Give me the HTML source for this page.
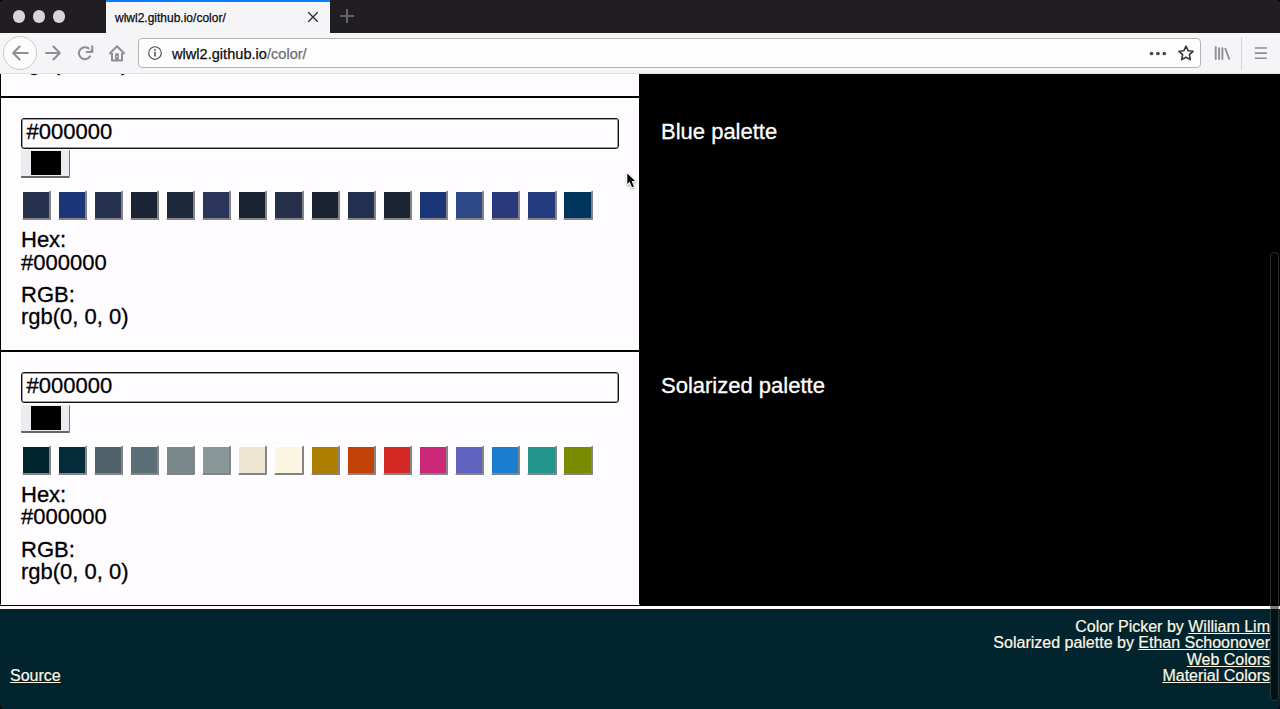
<!DOCTYPE html>
<html lang="en">
<head>
<meta charset="utf-8">
<title>wlwl2.github.io/color/</title>
<style>
*{box-sizing:border-box}
html,body{margin:0;padding:0}
body{width:1280px;height:709px;overflow:hidden;position:relative;background:#000;font-family:"Liberation Sans",Arial,Helvetica,sans-serif;color:#000}
svg{position:absolute;display:block;overflow:visible}
/* ---------- browser chrome ---------- */
#tabbar{position:absolute;left:0;top:0;width:1280px;height:33px;background:#201e21;border-radius:4px 4px 0 0}
.light{position:absolute;top:10.2px;width:12.6px;height:12.6px;border-radius:50%;background:#d6d4d7}
#tab{position:absolute;left:106px;top:0;width:224px;height:33px;background:#f5f4f7;border-top:2px solid #0a7cff}
#tabtitle{position:absolute;left:9px;top:7.5px;font-size:12px;line-height:16px;color:#0c0c0d;white-space:nowrap;-webkit-text-stroke:0.25px currentColor}
#navbar{position:absolute;left:0;top:33px;width:1280px;height:41px;background:#f5f4f7;border-bottom:1px solid #e0dfe3}
#backc{position:absolute;left:3px;top:3px;width:34px;height:34px;border-radius:50%;border:1px solid #c9c9cc;background:#fcfcfd}
#urlbar{position:absolute;left:138px;top:5px;width:1063px;height:30px;background:#fefdfe;border:1px solid #b4b4b7;border-radius:4px}
#urltext{position:absolute;left:33px;top:5.5px;font-size:14.6px;line-height:18px;color:#0c0c0d;white-space:nowrap;-webkit-text-stroke:0.25px currentColor}
#urltext span{color:#6e6e72}
#sep{position:absolute;left:1241px;top:4px;width:1px;height:33px;background:#d4d4d7}
/* ---------- page ---------- */
#page{position:absolute;left:0;top:74px;width:1280px;height:635px;overflow:hidden;background:#000}
.sec{position:absolute;left:0;width:640px;height:254px;border:1px solid #000;background:#fefcff;font-size:22px;line-height:22.5px;-webkit-text-stroke:0.3px #000}
.hexin{position:absolute;left:20px;top:19.5px;width:598px;height:31px;border:1px solid #111;box-shadow:inset 0 0 0 1px rgba(0,0,0,.38);border-radius:3px;background:#fefcff;font-size:22px;line-height:25px;padding:0 0 0 4.5px;white-space:nowrap}
.cin{position:absolute;left:20px;top:52px;width:49px;height:28px;background:#ececee;border-right:1.5px solid #777;border-bottom:2px solid #666;border-radius:1px}
.cin i{position:absolute;left:10px;top:1px;width:30px;height:24px;background:#000;display:block}
.sw{position:absolute;top:92.4px;width:29.2px;height:29.6px;border-style:solid;border-width:2px 2px 2px 1.5px;border-color:#fff #848486 #848486 #fff;border-radius:1.5px}
.t{position:absolute;left:20px;white-space:nowrap}
.rt{position:absolute;left:661px;font-size:22px;line-height:26px;color:#fff;white-space:nowrap;-webkit-text-stroke:0.3px #fff}
#whiteline{position:absolute;left:0;top:532px;width:1280px;height:3px;background:#fefcff}
#footer{position:absolute;left:0;top:535px;width:1280px;height:100px;border-radius:0 0 4px 4px;background:#02242f;color:#fdf6e3;font-size:16px;line-height:16.4px;-webkit-text-stroke:0.2px #fdf6e3}
#footer a{color:#fdf6e3;text-decoration:underline}
#fr{position:absolute;right:10px;top:9.7px;text-align:right;white-space:nowrap}
#fl{position:absolute;left:10px;top:58.9px}
#thumb{position:absolute;left:1270px;top:252px;width:9px;height:449px;border-radius:4.5px;background:rgba(0,0,0,.5);border:1px solid rgba(255,255,255,.16)}
.corner{position:absolute;width:5px;height:5px;background:#000}
</style>
</head>
<body>
<div id="tabbar">
  <div class="light" style="left:12.7px"></div><div class="light" style="left:32.7px"></div><div class="light" style="left:52.7px"></div>
  <div id="tab"><div id="tabtitle">wlwl2.github.io/color/</div>
    <svg style="left:202px;top:10px" width="10" height="10" viewBox="0 0 10 10"><path d="M0.3 0.3L9.7 9.7M9.7 0.3L0.3 9.7" stroke="#2a2a2e" stroke-width="1.3" fill="none"/></svg>
  </div>
  <svg style="left:340px;top:9px" width="14" height="14" viewBox="0 0 14 14"><path d="M7 0V14M0 7H14" stroke="#646367" stroke-width="2" fill="none"/></svg>
</div>
<div id="navbar">
  <div id="backc"></div>
  <!-- back -->
  <svg style="left:12px;top:13px" width="16" height="14" viewBox="0 0 16 14"><path d="M15.8 7H1.2M7.6 0.5L1.2 7L7.6 13.5" stroke="#8f8f92" stroke-width="2.1" fill="none" stroke-linecap="round" stroke-linejoin="round"/></svg>
  <!-- forward -->
  <svg style="left:45px;top:13px" width="16" height="14" viewBox="0 0 16 14"><path d="M1.1 7H14.8M8.4 0.5L14.8 7L8.4 13.5" stroke="#8f8f92" stroke-width="2.1" fill="none" stroke-linecap="round" stroke-linejoin="round"/></svg>
  <!-- reload -->
  <svg style="left:77px;top:12px" width="17" height="16" viewBox="0 0 17 16"><path d="M11.6 3.4A6 6 0 1 0 13 11.4" stroke="#8f8f92" stroke-width="2" fill="none" stroke-linecap="round"/><path d="M15.3 1.3V6.9H9.6" fill="none" stroke="#8f8f92" stroke-width="2" stroke-linejoin="round" stroke-linecap="round"/><path d="M15.3 6.9V3.6L12 6.9Z" fill="#8f8f92"/></svg>
  <!-- home -->
  <svg style="left:109px;top:12px" width="16" height="16" viewBox="0 0 16 16"><path d="M1 8.2L8 1.2L15 8.2" stroke="#8f8f92" stroke-width="2" fill="none" stroke-linecap="round" stroke-linejoin="round"/><path d="M3 8V15.6H13V8" stroke="#8f8f92" stroke-width="2" fill="none" stroke-linejoin="round"/><path d="M6.1 8.3H9.9V15H6.1Z" fill="#8f8f92"/><circle cx="8" cy="11.6" r="0.7" fill="#f1f0f3"/></svg>
  <div id="urlbar">
    <svg style="left:9px;top:7px" width="14" height="14" viewBox="0 0 14 14"><circle cx="7" cy="7" r="6.3" stroke="#4c4c50" stroke-width="1.15" fill="none"/><circle cx="7" cy="3.9" r="0.95" fill="#4c4c50"/><path d="M7 5.9V10.4" stroke="#4c4c50" stroke-width="1.6" fill="none"/></svg>
    <div id="urltext">wlwl2.github.io<span>/color/</span></div>
    <svg style="left:1010.2px;top:11.6px" width="18" height="5" viewBox="0 0 18 5"><circle cx="2.5" cy="2.5" r="1.85" fill="#4a4a4f"/><circle cx="8.9" cy="2.5" r="1.85" fill="#4a4a4f"/><circle cx="15.3" cy="2.5" r="1.85" fill="#4a4a4f"/></svg>
    <svg style="left:1039px;top:5.7px" width="16" height="16" viewBox="0 0 16 16"><path d="M8 1.2L10.1 5.7L15 6.3L11.4 9.7L12.3 14.6L8 12.2L3.7 14.6L4.6 9.7L1 6.3L5.9 5.7Z" stroke="#3a3a3e" stroke-width="1.65" fill="none" stroke-linejoin="round"/></svg>
  </div>
  <!-- library -->
  <svg style="left:1214px;top:12px" width="17" height="15" viewBox="0 0 17 15"><path d="M1.7 1.3V14.7M5.1 2.6V14.7M8.4 2.6V14.7M11.1 3L15.4 14.5" stroke="#8f8f92" stroke-width="1.9" fill="none" stroke-linecap="butt"/></svg>
  <div id="sep"></div>
  <!-- menu -->
  <svg style="left:1254px;top:13px" width="13" height="13" viewBox="0 0 13 13"><path d="M0.8 2H12.9M0.8 7.1H12.9M0.8 12.3H12.9" stroke="#8f8f92" stroke-width="1.6" fill="none"/></svg>
</div>
<div id="page">
  <div class="sec" style="top:-231px"><div class="t" style="top:208px">rgb(0, 0, 0)</div></div>
  <div class="sec" style="top:23px">
    <div class="hexin">#000000</div><div class="cin"><i></i></div>
    <div class="sw" style="left:20.50px;background:#27324e"></div><div class="sw" style="left:56.63px;background:#1b3677"></div><div class="sw" style="left:92.76px;background:#26324f"></div><div class="sw" style="left:128.89px;background:#1b2434"></div><div class="sw" style="left:165.02px;background:#1e283c"></div><div class="sw" style="left:201.15px;background:#2b345a"></div><div class="sw" style="left:237.28px;background:#1a2232"></div><div class="sw" style="left:273.41px;background:#27304b"></div><div class="sw" style="left:309.54px;background:#1b2333"></div><div class="sw" style="left:345.67px;background:#232f4f"></div><div class="sw" style="left:381.80px;background:#1c2433"></div><div class="sw" style="left:417.93px;background:#1b3678"></div><div class="sw" style="left:454.06px;background:#2f4888"></div><div class="sw" style="left:490.19px;background:#2a387c"></div><div class="sw" style="left:526.32px;background:#243a7e"></div><div class="sw" style="left:562.45px;background:#00355e"></div>
    <div class="t" style="top:131px">Hex:</div><div class="t" style="top:153.5px">#000000</div>
    <div class="t" style="top:186.4px">RGB:</div><div class="t" style="top:208.4px">rgb(0, 0, 0)</div>
  </div>
  <div class="sec" style="top:277px;border-bottom-color:#fefcff">
    <div class="hexin">#000000</div><div class="cin" style="top:52.5px"><i></i></div>
    <div class="sw" style="top:93px;left:20.50px;background:#00252f"></div><div class="sw" style="top:93px;left:56.63px;background:#062c3b"></div><div class="sw" style="top:93px;left:92.76px;background:#4f626a"></div><div class="sw" style="top:93px;left:128.89px;background:#5c6f78"></div><div class="sw" style="top:93px;left:165.02px;background:#7a888c"></div><div class="sw" style="top:93px;left:201.15px;background:#8a9799"></div><div class="sw" style="top:93px;left:237.28px;background:#ece5d2"></div><div class="sw" style="top:93px;left:273.41px;background:#fcf5e1"></div><div class="sw" style="top:93px;left:309.54px;background:#ac7f00"></div><div class="sw" style="top:93px;left:345.67px;background:#c44108"></div><div class="sw" style="top:93px;left:381.80px;background:#d52a24"></div><div class="sw" style="top:93px;left:417.93px;background:#cc2878"></div><div class="sw" style="top:93px;left:454.06px;background:#5f63bd"></div><div class="sw" style="top:93px;left:490.19px;background:#1b7dcf"></div><div class="sw" style="top:93px;left:526.32px;background:#22958c"></div><div class="sw" style="top:93px;left:562.45px;background:#788b00"></div>
    <div class="t" style="top:131.6px">Hex:</div><div class="t" style="top:154.1px">#000000</div>
    <div class="t" style="top:187px">RGB:</div><div class="t" style="top:209px">rgb(0, 0, 0)</div>
  </div>
  <div class="rt" style="top:45.3px">Blue palette</div>
  <div class="rt" style="top:299.3px">Solarized palette</div>
  <div id="whiteline"></div>
  <div id="footer">
    <div id="fr">Color Picker by <a>William Lim</a><br>Solarized palette by <a>Ethan Schoonover</a><br><a>Web Colors</a><br><a>Material Colors</a></div>
    <div id="fl"><a>Source</a></div>
  </div>
</div>
<!-- mouse cursor -->
<svg style="left:620px;top:168px" width="22" height="26" viewBox="0 0 22 26"><path d="M7.3 5.4V15.9L9.7 13.8L12 19.3L13.9 18.5L11.6 13.1H15.1Z" fill="#000" stroke="#fff" stroke-width="2.2" stroke-linejoin="round" paint-order="stroke" style="filter:drop-shadow(0 1px 1px rgba(0,0,0,.35))"/></svg>
<div id="thumb"></div>
</body>
</html>
